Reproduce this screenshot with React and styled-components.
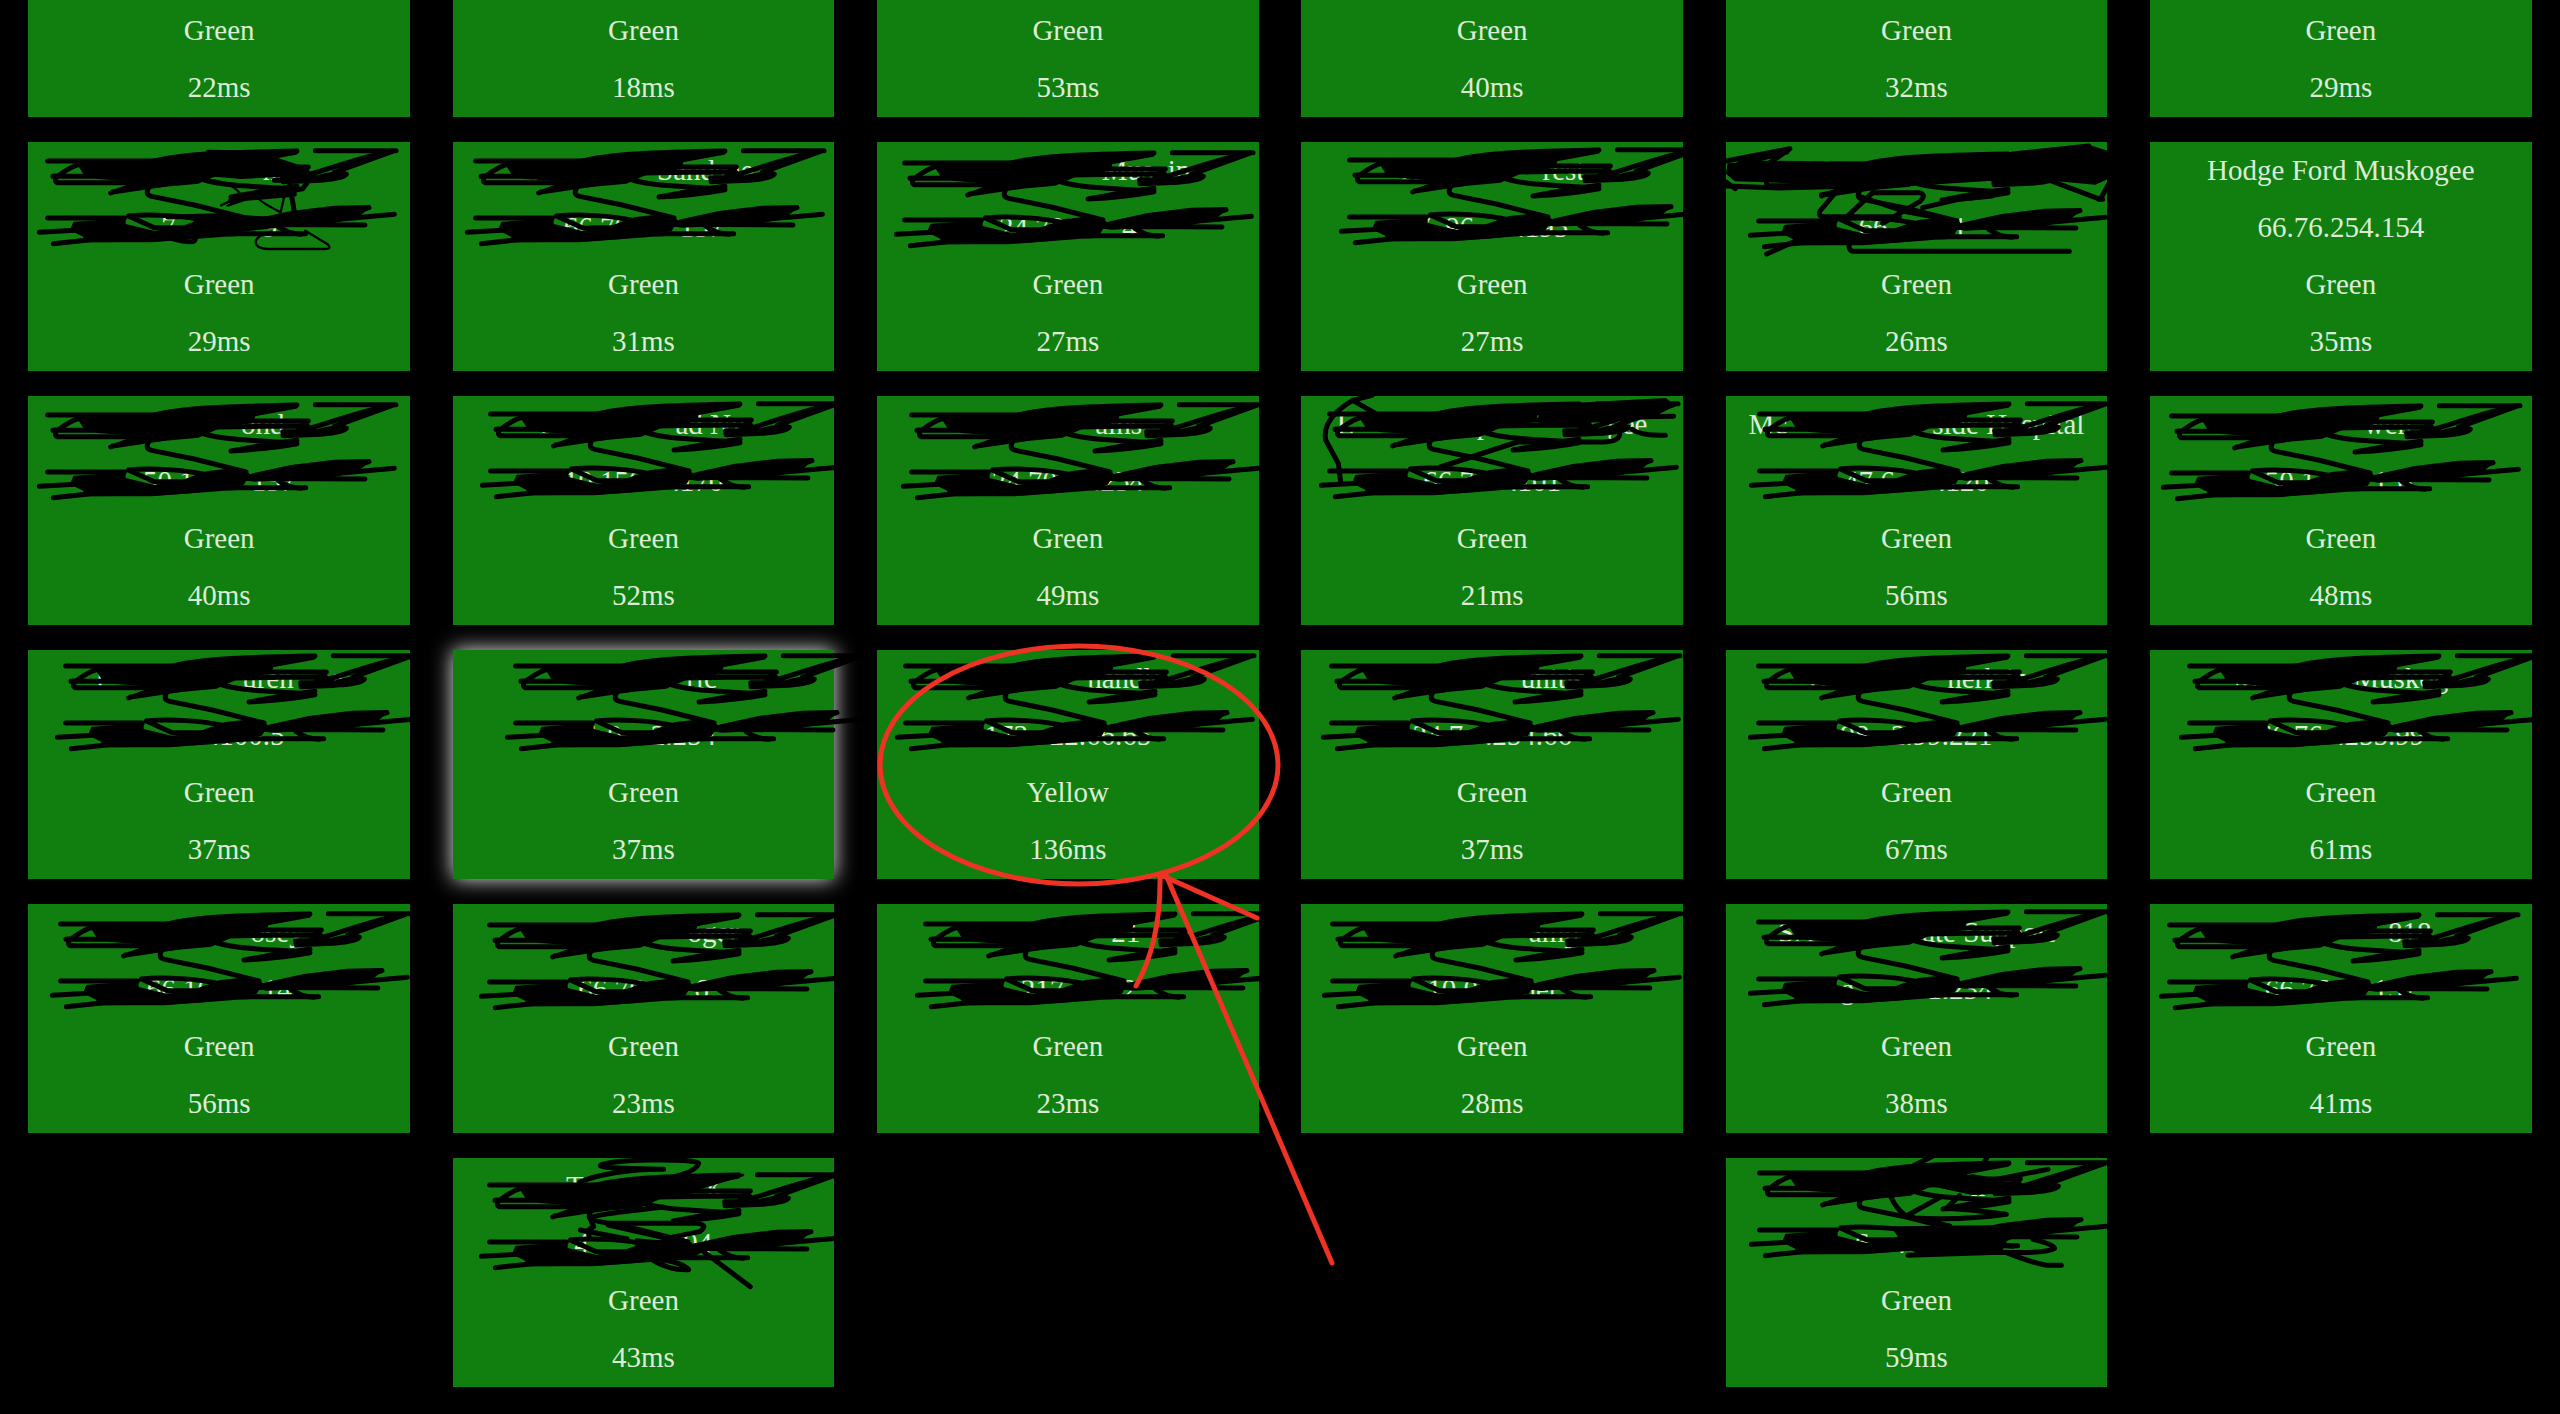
import styled, { createGlobalStyle } from "styled-components";

const GlobalStyle = createGlobalStyle`
  body {
    margin: 0;
    background: #000;
    color: #dcecd8;
    font-family: "Liberation Serif", "Times New Roman", serif;
    font-size: 29px;
    line-height: 33px;
  }
`;

const Board = styled.main`
  display: flex;
  flex-wrap: wrap;
  justify-content: space-around;
  row-gap: 25px;
  padding: 0 7px 26px;
  overflow: hidden;
`;

const Card = styled.article`
  position: relative;
  z-index: ${({ $raised }) => ($raised ? 1 : 0)};
  box-sizing: border-box;
  display: flex;
  flex-direction: column;
  gap: 24px;
  width: 15%;
  padding: ${({ $cut }) => ($cut ? "14px" : "12px")} 0 13px;
  background: #107f10;
  text-align: center;
  box-shadow: ${({ $active }) => ($active ? "0 0 20px #eee" : "none")};
`;

const Line = styled.p`
  height: 33px;
  margin: 0;
  white-space: pre;
`;

const Ink = styled.svg`
  position: absolute;
  width: 360px;
  height: 100px;
  overflow: visible;
  fill: none;
  stroke: #000;
  stroke-width: 15;
  stroke-linecap: round;
  stroke-linejoin: round;
  pointer-events: none;

  .solid {
    fill: #000;
    stroke-width: 8;
  }

  .thin {
    stroke-width: 7;
  }
`;

const Marker = styled.svg`
  position: absolute;
  top: 0;
  left: 0;
  width: 382px;
  height: 229px;
  overflow: visible;
  fill: none;
  stroke: #ee3224;
  stroke-width: 5;
  stroke-linecap: round;
  pointer-events: none;
`;

// extra pen strokes that only some cards have
const extras = {
  loops: (
    <>
      <path
        className="solid"
        d="M600 42 L700 44 L790 60 L880 90 L880 112 L700 122 L560 110 Z M560 250 L840 240 L880 262 L700 280 Z"
      />
      <path d="M668 192 L885 155 L898 138 M690 186 L860 172 M836 80 L861 231 M850 130 L800 130 M480 240 L640 236 L820 250" />
      <path
        className="thin"
        d="M620 130 Q700 146 704 191 L660 206 M704 175 L640 205 M745 171 Q742 188 819 226 L836 151 M893 281 L960 322 Q974 336 951 336 H780 Q740 334 745 310 Q755 292 790 284"
      />
      <path d="M490 304 Q550 320 560 312 Q570 300 540 294" />
    </>
  ),
  wide: (
    <>
      <path
        className="solid"
        d="M30 74 L130 66 L470 70 L860 48 L1110 18 L1165 36 L1170 112 L1130 130 L1000 118 L840 134 L820 118 L540 136 L440 144 L180 124 L50 120 L26 100 Z"
      />
      <path d="M22 63 L214 26 L180 50 L120 92 M205 36 L60 72 M22 126 L50 146 M24 138 L180 144 L420 138" />
      <path d="M880 42 L1110 18 M990 120 L1145 178 L1170 132 M1140 178 h12" />
      <path d="M308 165 L352 156 L304 213 Q298 230 316 230 H542 M462 158 L382 233 M420 168 L552 213 L712 243 M462 158 H600 Q626 163 604 184 L492 250 M612 203 L720 178 L820 168" />
      <path d="M392 308 Q387 334 407 334 H1052 M144 342 L242 298" />
    </>
  ),
  arc: (
    <>
      <path d="M247 16 L189 31 Q96 86 108 150 L146 220 L153 276 M189 31 L255 69" />
      <path
        className="solid"
        d="M750 48 L1127 28 L1150 46 L1100 72 L960 92 L750 98 Z"
      />
      <path d="M782 84 L1152 79 M1028 118 Q1050 136 1127 136 M452 231 L683 156 H940 Q990 154 990 132" />
    </>
  ),
  swirl: (
    <>
      <path d="M642 25 C580 22 460 24 452 14 C470 -6 740 -8 747 6 C740 40 640 56 560 70 M642 25 C540 24 440 40 390 64" />
      <path
        className="solid"
        d="M600 60 L880 42 L720 90 L610 105 Z M560 236 L780 256 L720 290 L560 296 Z"
      />
      <path d="M640 138 C520 152 420 162 422 174 L432 197 Q412 204 418 222 M472 187 H740 Q780 192 750 212 L660 230 M476 192 L652 232 L720 250 M392 207 L532 234" />
      <path d="M600 292 Q660 330 717 326 Q700 306 640 296 M762 272 L902 377" />
    </>
  ),
  hatch: (
    <>
      <path d="M640 21 L540 71 M805 21 L780 61 M985 61 L750 106 M1000 100 L840 124 M515 146 Q530 180 560 201 L690 231 M560 201 L660 146 M570 206 Q720 216 860 196 L760 184 L680 178 L720 140" />
      <path
        className="solid"
        d="M520 236 L880 232 L1060 222 L900 256 L860 272 L840 312 L600 314 L560 290 Z M760 80 L840 94 L880 128 L760 134 L600 100 Z"
      />
      <path d="M940 271 Q1005 286 1005 298 Q980 314 840 310 L565 319 M860 311 Q940 342 980 349 H1025" />
    </>
  ),
};

const cut = [
  ["Green", "22ms"],
  ["Green", "18ms"],
  ["Green", "53ms"],
  ["Green", "40ms"],
  ["Green", "32ms"],
  ["Green", "29ms"],
];

const sites = [
  { name: "              n", ip: "7  .        .9", time: "29ms", ink: [18, 19], extra: "loops" },
  { name: "P               Sandsne", ip: "66.70       157", time: "31ms", ink: [21, 19] },
  { name: "S                 - Mus  in", ip: "24.706      4", time: "27ms", ink: [26, 21] },
  { name: "R                 rest", ip: "7  96      .195", time: "27ms", ink: [47, 18] },
  { name: "M                          r", ip: "66  .      1 ", time: "26ms", ink: [31, 22], extra: "wide" },
  { name: "Hodge Ford Muskogee", ip: "66.76.254.154", time: "35ms" },
  { name: "            ond", ip: "50.1        137", time: "40ms", ink: [18, 19] },
  { name: "T                 ad Nw", ip: "10.150    .170", time: "52ms", ink: [36, 18] },
  { name: "              ains", ip: "24.70     .254", time: "49ms", ink: [33, 19] },
  { name: "L                 p                gee", ip: "66.7     .101", time: "21ms", ink: [27, 18], extra: "arc" },
  { name: "Mc                    side Hospital", ip: "47.6      .120", time: "56ms", ink: [32, 18] },
  { name: "             wen", ip: "50.1       .151", time: "48ms", ink: [20, 20] },
  { name: "F                  uren     e", ip: "        .100.5", time: "37ms", ink: [36, 16] },
  { name: "                ric", ip: "71.0    2.254", time: "37ms", ink: [61, 16], active: true },
  { name: "                handle", ip: "173.  22.66.65", status: "Yellow", time: "136ms", ink: [27, 16], marked: true },
  { name: "                 unitie", ip: "24.7   .254.66", time: "37ms", ink: [29, 16] },
  { name: "W                nerk in", ip: "98.  2.99.221", time: "67ms", ink: [31, 16] },
  { name: "M             Muskog", ip: "66.76  .255.99", time: "61ms", ink: [38, 16] },
  { name: "                osey", ip: "66.10      .14", time: "56ms", ink: [31, 20] },
  { name: "S                 oger", ip: "66.76      .6", time: "23ms", ink: [35, 21] },
  { name: "                21", ip: "  .217       .2", time: "23ms", ink: [47, 20] },
  { name: "                 amp", ip: "10.0      net", time: "28ms", ink: [30, 20] },
  { name: "SA               ate Support", ip: "g          1.234", time: "38ms", ink: [31, 18] },
  { name: "                   818", ip: "66.76      157", time: "41ms", ink: [18, 21] },
  { name: "T                 k", ip: "4            .94", time: "43ms", ink: [35, 27], extra: "swirl" },
  { name: "                 n", ip: "6    .       .  ", time: "59ms", ink: [32, 15], extra: "hatch" },
];

function Scribble({ at, extra }) {
  const [x, y] = at;

  return (
    <Ink viewBox="85 30 1080 300" style={{ left: x - 10, top: y - 14 }} aria-hidden="true">
      <path
        className="solid"
        d="M212 80 L430 70 L520 58 L748 46 L800 50 L740 72 L734 92 L640 106 L572 136 L440 148 L330 160 L400 132 L270 122 L230 108 Z"
      />
      <path d="M120 72 H440 C520 52 640 46 868 42 C760 62 620 66 520 96 M923 41 H1165 M864 46 L740 68" />
      <path d="M215 82 Q190 88 152 116 L136 118 H420 M146 120 Q140 132 148 137 H440" />
      <path d="M309 168 L440 124 M315 165 L470 142" />
      <path d="M1152 44 C1060 58 980 92 900 114 L826 130 M1152 44 L980 106 M825 122 H930 Q1000 104 1016 112 Q1012 124 940 130 L826 134 M560 90 H902 L880 106 M620 108 L760 106 H900" />
      <path d="M570 122 C640 152 770 146 868 158 Q780 174 670 180 L790 158 L868 148" />
      <path d="M430 142 Q406 172 432 178 L560 204 L715 243" />
      <path
        className="solid"
        d="M200 258 L350 248 L350 264 L440 286 L520 272 L600 244 L690 234 L722 250 L706 278 L560 302 L430 310 L240 312 L228 296 L192 278 Z"
      />
      <path d="M120 243 H350 M362 237 C430 230 530 236 600 252 M362 237 L440 272 L560 272 M95 286 L230 278 M137 320 L250 308 H430 C520 304 600 292 690 290 H894" />
      <path
        className="solid"
        d="M740 250 L850 226 L980 210 L1084 208 L1050 238 L960 258 L740 268 L700 262 Z"
      />
      <path d="M700 262 L1072 264 M960 250 C1060 240 1100 238 1160 232 M1040 226 L1084 212 M810 268 Q840 290 880 292" />
      {extra && extras[extra]}
    </Ink>
  );
}

function CircleAndArrow() {
  return (
    <Marker viewBox="0 0 382 229" aria-hidden="true">
      <ellipse cx="202" cy="115" rx="199" ry="119" />
      <path d="M283 226 Q284 292 259 336 M284 225 L380 268 M289 225 L455 613" />
    </Marker>
  );
}

function SiteCard({ site }) {
  const { name, ip, status = "Green", time, ink, extra, active, marked } = site;

  return (
    <Card $active={active} $raised={marked}>
      <Line>{name}</Line>
      <Line>{ip}</Line>
      <Line>{status}</Line>
      <Line>{time}</Line>
      {ink && <Scribble at={ink} extra={extra} />}
      {marked && <CircleAndArrow />}
    </Card>
  );
}

export default function App() {
  return (
    <>
      <GlobalStyle />
      <Board>
        {cut.map(([status, time]) => (
          <Card key={time} $cut>
            <Line>{status}</Line>
            <Line>{time}</Line>
          </Card>
        ))}
        {sites.map((site, i) => (
          <SiteCard key={i} site={site} />
        ))}
      </Board>
    </>
  );
}
